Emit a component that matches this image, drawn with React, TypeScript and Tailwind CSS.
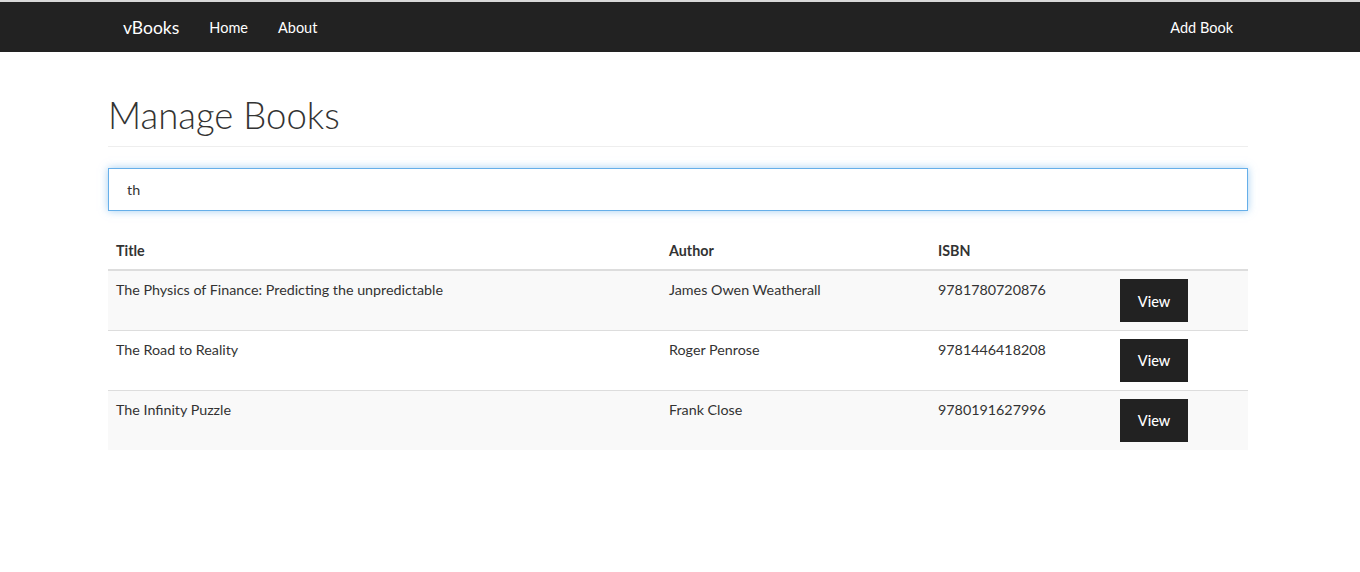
import React from "react";

const rows = [
  { title: "The Physics of Finance: Predicting the unpredictable", author: "James Owen Weatherall", isbn: "9781780720876" },
  { title: "The Road to Reality", author: "Roger Penrose", isbn: "9781446418208" },
  { title: "The Infinity Puzzle", author: "Frank Close", isbn: "9780191627996" },
];

export default function App() {
  return (
    <div className="min-h-[572px] bg-white text-[#333] [font-family:Lato,'Liberation_Sans',sans-serif] text-[14.3px]">
      <div className="border-t-2 border-[#d9d9d9] bg-[#222] h-[52px]">
        <div className="w-[1140px] ml-[108px] flex items-center h-[50px] pt-[2px]">
          <span className="px-[15px] text-[17.5px] text-white">vBooks</span>
          <span className="px-[15px] text-[14.5px] text-white">Home</span>
          <span className="px-[15px] text-[14.5px] text-white">About</span>
          <span className="ml-auto px-[15px] text-[14.5px] text-white">Add Book</span>
        </div>
      </div>
      <div className="w-[1140px] ml-[108px]">
        <h1 className="mt-[40px] pb-[8px] border-b border-[#eee] text-[36.5px] font-light leading-[46px] text-[#333]">Manage Books</h1>
        <div className="mt-[21px] h-[43px] border border-[#66afe9] shadow-[0_0_8px_rgba(102,175,233,0.6)] flex items-center px-[18px]">th</div>
        <table className="mt-[21px] w-full border-collapse table-fixed">
          <colgroup>
            <col className="w-[553px]" />
            <col className="w-[269px]" />
            <col className="w-[182px]" />
            <col />
          </colgroup>
          <thead>
            <tr className="border-b-2 border-[#ddd]">
              <th className="text-left font-bold px-[8px] pt-[8px] pb-[8px] leading-[21px]">Title</th>
              <th className="text-left font-bold px-[8px] pt-[8px] pb-[8px] leading-[21px]">Author</th>
              <th className="text-left font-bold px-[8px] pt-[8px] pb-[8px] leading-[21px]">ISBN</th>
              <th></th>
            </tr>
          </thead>
          <tbody>
            {rows.map((r, i) => (
              <tr key={r.isbn} className={`border-t border-[#ddd] first:border-t-0 ${i % 2 === 0 ? "bg-[#f9f9f9]" : "bg-white"}`}>
                <td className="align-top px-[8px] pt-[8px] leading-[21px] h-[60px]">{r.title}</td>
                <td className="align-top px-[8px] pt-[8px] leading-[21px]">{r.author}</td>
                <td className="align-top px-[8px] pt-[8px] leading-[21px]">{r.isbn}</td>
                <td className="align-top px-[8px] pt-[8px]">
                  <button className="w-[68px] h-[43px] pt-[2px] bg-[#222] text-white text-[14.5px] font-medium">View</button>
                </td>
              </tr>
            ))}
          </tbody>
        </table>
      </div>
    </div>
  );
}
